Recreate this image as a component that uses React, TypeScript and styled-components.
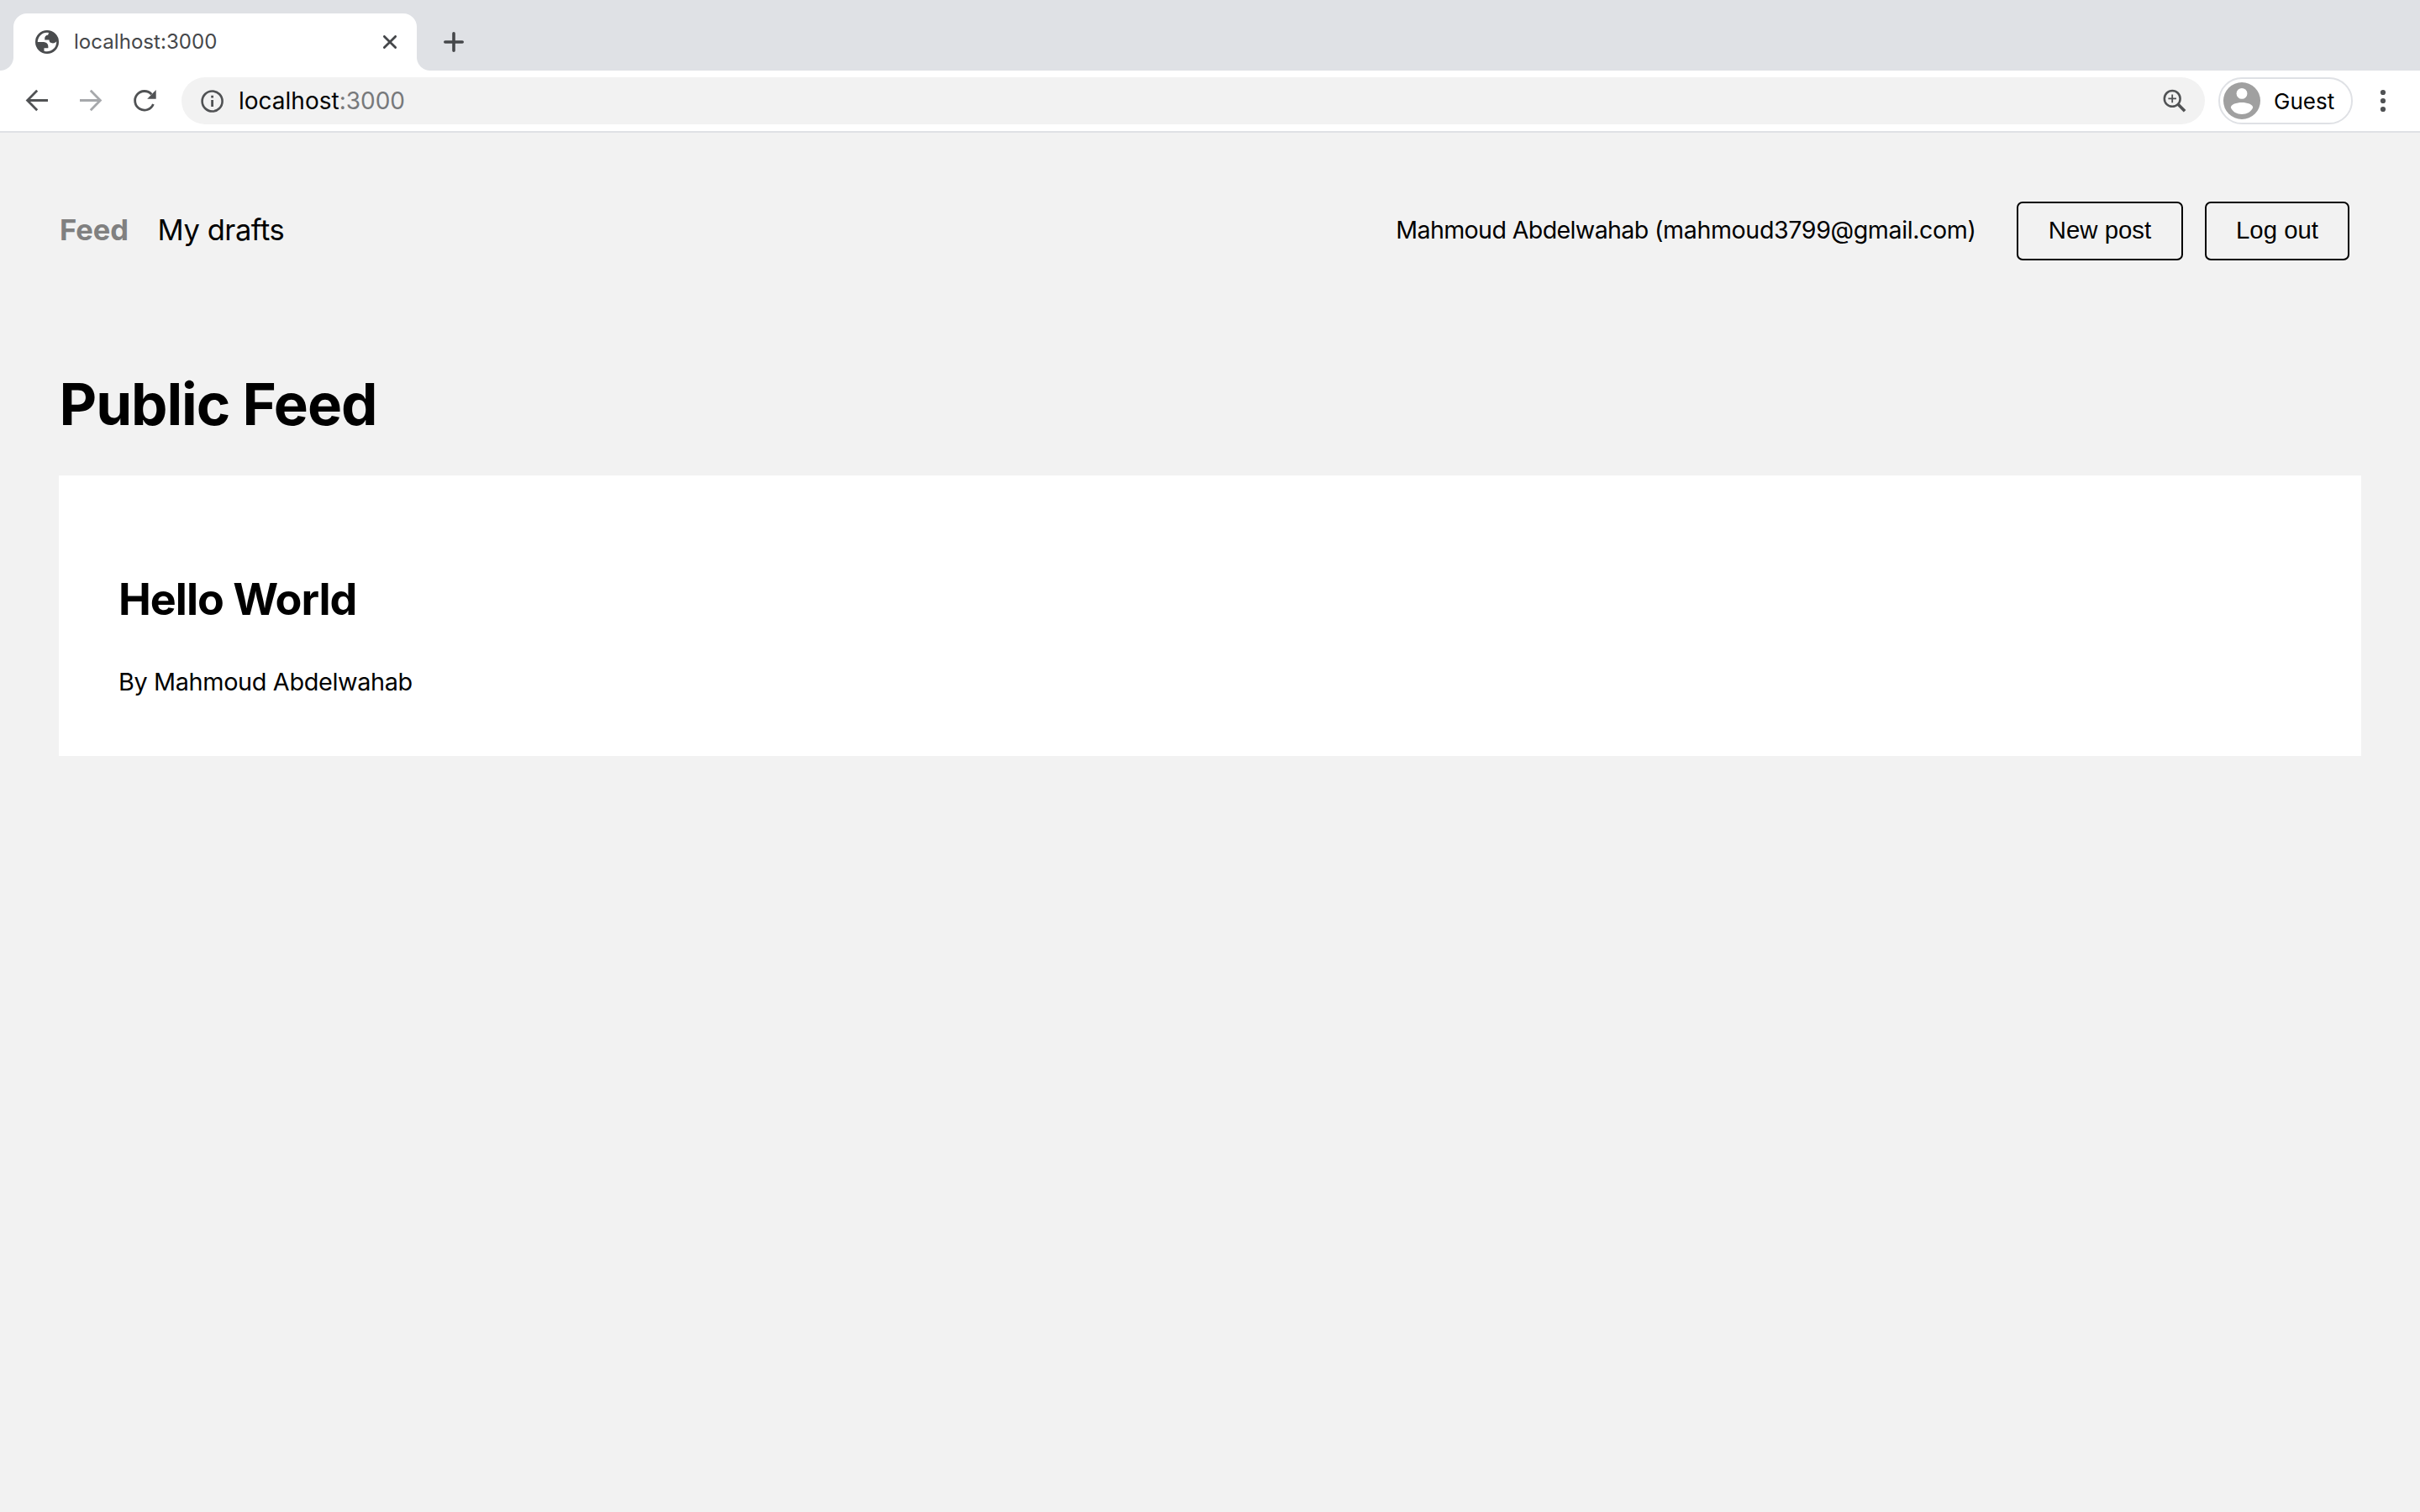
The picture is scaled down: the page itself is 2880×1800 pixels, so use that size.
import React from 'react';
import styled, { createGlobalStyle } from 'styled-components';

const GlobalStyle = createGlobalStyle`
  * {
    box-sizing: border-box;
  }

  body {
    margin: 0;
    background-color: #f2f2f2;
    color: #000;
    font-family: Inter, 'Liberation Sans', sans-serif;
  }
`;

const Window = styled.div`
  display: flex;
  flex-direction: column;
  width: 100%;
  min-height: 100vh;
`;

const TabStrip = styled.div`
  display: flex;
  height: 84px;
  padding: 16px 16px 0;
  background-color: #dfe1e5;
`;

const Tab = styled.div`
  position: relative;
  display: flex;
  align-items: center;
  width: 480px;
  padding: 0 24px 0 26px;
  background-color: #fff;
  border-radius: 16px 16px 0 0;

  &::before,
  &::after {
    content: '';
    position: absolute;
    bottom: 0;
    width: 16px;
    height: 16px;
  }

  &::before {
    left: -16px;
    background: radial-gradient(circle at 0 0, transparent 15.5px, #fff 16.5px);
  }

  &::after {
    right: -16px;
    background: radial-gradient(circle at 100% 0, transparent 15.5px, #fff 16.5px);
  }
`;

const TabTitle = styled.span`
  flex: 1;
  margin-left: 18px;
  font-size: 24px;
  line-height: 30px;
  letter-spacing: 0.05px;
  color: #45474a;
`;

const NewTab = styled.div`
  display: flex;
  align-items: center;
  margin-left: 31px;
`;

const Toolbar = styled.div`
  display: flex;
  align-items: center;
  height: 74px;
  padding: 0 32px 0 30px;
  background-color: #fff;
  border-bottom: 2px solid #dfe1e5;
`;

const NavButtons = styled.div`
  display: flex;
  gap: 36px;
`;

const Omnibox = styled.div`
  display: flex;
  align-items: center;
  flex: 1;
  height: 56px;
  margin-left: 30px;
  padding: 0 22px 0 23px;
  background-color: #f2f2f2;
  border-radius: 28px;
`;

const Url = styled.span`
  flex: 1;
  margin-left: 17px;
  font-size: 28px;
  line-height: 36px;
`;

const Port = styled.span`
  color: #77797b;
`;

const Profile = styled.div`
  display: flex;
  align-items: center;
  width: 160px;
  height: 56px;
  margin: 0 24px 0 16px;
  padding-left: 4px;
  border: 2px solid #dfe1e5;
  border-radius: 28px;
`;

const ProfileName = styled.span`
  margin-left: 16px;
  padding-top: 1px;
  font-size: 26px;
  line-height: 34px;
`;

const Page = styled.main`
  flex: 1;
  padding: 82px 70px 0;
`;

const Header = styled.nav`
  display: flex;
  align-items: center;
  justify-content: space-between;
  height: 70px;
  padding: 0 14px 0 1px;
`;

const Group = styled.div`
  display: flex;
  align-items: center;
`;

const NavLink = styled.a<{ $active?: boolean }>`
  margin-right: 34.5px;
  padding-bottom: 3px;
  font-size: 34.5px;
  line-height: 44px;
  font-weight: ${({ $active }) => ($active ? 700 : 400)};
  letter-spacing: ${({ $active }) => ($active ? '0' : '-0.45px')};
  color: ${({ $active }) => ($active ? '#808080' : '#000')};
`;

const User = styled.p`
  margin: 0 48.5px 0 0;
  padding-bottom: 3px;
  font-size: 28.6px;
  line-height: 36px;
  letter-spacing: -0.63px;
`;

const Email = styled.span`
  letter-spacing: -0.39px;
`;

const Button = styled.a<{ $width: number }>`
  display: flex;
  align-items: center;
  justify-content: center;
  width: ${({ $width }) => $width}px;
  height: 70px;
  padding-bottom: 3px;
  border: 2px solid #000;
  border-radius: 7px;
  font-family: 'Liberation Sans', Arial, sans-serif;
  font-size: 29.33px;

  & + & {
    margin-left: 26px;
  }
`;

const Title = styled.h1`
  margin: 129px 0 43px;
  padding-left: 0.5px;
  font-size: 69px;
  line-height: 84px;
  letter-spacing: -1.08px;
`;

const Post = styled.article`
  height: 334px;
  padding: 116px 71px 0;
  background-color: #fff;
`;

const PostTitle = styled.h2`
  margin: 0 0 48px;
  font-size: 52px;
  line-height: 64px;
  letter-spacing: -1px;
`;

const Author = styled.small`
  display: block;
  font-size: 28.8px;
  line-height: 35px;
  letter-spacing: -0.34px;
`;

const GlobeIcon = () => (
  <svg width="28" height="28" viewBox="2 2 20 20" fill="#4a4c4e">
    <path
      fillRule="evenodd"
      d="M12 2a10 10 0 1 0 0 20 10 10 0 0 0 0-20zM4 12h4.4c3.407.022 4.922 1.73 4.543 5.127H9.488v2.47a8.004 8.004 0 0 0 10.498-8.083C19.327 12.504 18.332 13 17 13c-2.137 0-3.205-.916-3.205-2.75h-3.748c-.274-2.728.683-4.092 2.87-4.092 0-.975.327-1.597.811-1.97A8.004 8.004 0 0 0 4 12z"
    />
  </svg>
);

const CloseIcon = () => (
  <svg width="16" height="16" viewBox="0 0 16 16" stroke="#45474a" strokeWidth="2.8" strokeLinecap="round">
    <path d="M1.4 1.4l13.2 13.2M14.6 1.4L1.4 14.6" />
  </svg>
);

const PlusIcon = () => (
  <svg width="26" height="26" viewBox="0 0 26 26" stroke="#45474a" strokeWidth="3.6" strokeLinecap="round">
    <path d="M13 2.8v20.4M2.8 13h20.4" />
  </svg>
);

const BackIcon = () => (
  <svg width="28" height="28" viewBox="0 0 28 28" fill="none" stroke="#505254" strokeWidth="2.8">
    <path d="M27 13.5H3M14.2 1.800L2.6 13.5l11.6 11.700" />
  </svg>
);

const ForwardIcon = () => (
  <svg width="28" height="28" viewBox="0 0 28 28" fill="none" stroke="#a6a8ab" strokeWidth="2.8">
    <path d="M1 13.5h24M13.8 1.800l11.6 11.700-11.6 11.700" />
  </svg>
);

const ReloadIcon = () => (
  <svg width="28" height="28" viewBox="0 0 28 28" fill="none">
    <path d="M22.3 6.2A11.3 11.3 0 1 0 24.4 18" stroke="#505254" strokeWidth="2.8" />
    <path d="M27.7 1v10.8H17.2z" fill="#505254" />
  </svg>
);

const InfoIcon = () => (
  <svg width="28" height="28" viewBox="0 0 28 28" fill="none" stroke="#505254">
    <circle cx="13.600" cy="14.500" r="12" strokeWidth="2.6" />
    <path d="M13.600 7.8v2.8M13.600 12.9v8.2" strokeWidth="2.8" />
  </svg>
);

const ZoomIcon = () => (
  <svg width="28" height="28" viewBox="0 0 28 28" fill="none" stroke="#505254">
    <circle cx="11.2" cy="11.4" r="9.4" strokeWidth="2.5" />
    <path d="M17.9 18.1l8.2 8.2" strokeWidth="3.6" />
    <path d="M11.2 6.6v9.6M6.4 11.4H16" strokeWidth="1.8" />
  </svg>
);

const AvatarIcon = () => (
  <svg width="44" height="44" viewBox="0 0 44 44">
    <circle cx="22" cy="22" r="22" fill="#a0a0a0" />
    <circle cx="22" cy="13.4" r="6.4" fill="#fff" />
    <path d="M8.8 30c0-3.8 7-6 13.2-6s13.2 2.2 13.2 6c-2 5-7.4 8-13.2 8S10.8 35 8.8 30z" fill="#fff" />
  </svg>
);

const MenuIcon = () => (
  <svg width="24" height="28" viewBox="0 0 24 28" fill="#505254">
    <circle cx="12" cy="4" r="3.1" />
    <circle cx="12" cy="14" r="3.1" />
    <circle cx="12" cy="24" r="3.1" />
  </svg>
);

const BrowserBar = () => (
  <>
    <TabStrip>
      <Tab>
        <GlobeIcon />
        <TabTitle>localhost:3000</TabTitle>
        <CloseIcon />
      </Tab>
      <NewTab>
        <PlusIcon />
      </NewTab>
    </TabStrip>
    <Toolbar>
      <NavButtons>
        <BackIcon />
        <ForwardIcon />
        <ReloadIcon />
      </NavButtons>
      <Omnibox>
        <InfoIcon />
        <Url>
          localhost<Port>:3000</Port>
        </Url>
        <ZoomIcon />
      </Omnibox>
      <Profile>
        <AvatarIcon />
        <ProfileName>Guest</ProfileName>
      </Profile>
      <MenuIcon />
    </Toolbar>
  </>
);

const App = () => {
  return (
    <Window>
      <GlobalStyle />
      <BrowserBar />
      <Page>
        <Header>
          <Group>
            <NavLink $active>Feed</NavLink>
            <NavLink>My drafts</NavLink>
          </Group>
          <Group>
            <User>
              Mahmoud Abdelwahab <Email>(mahmoud3799@gmail.com)</Email>
            </User>
            <Button $width={198}>New post</Button>
            <Button $width={172}>Log out</Button>
          </Group>
        </Header>
        <Title>Public Feed</Title>
        <Post>
          <PostTitle>Hello World</PostTitle>
          <Author>By Mahmoud Abdelwahab</Author>
        </Post>
      </Page>
    </Window>
  );
};

export default App;
